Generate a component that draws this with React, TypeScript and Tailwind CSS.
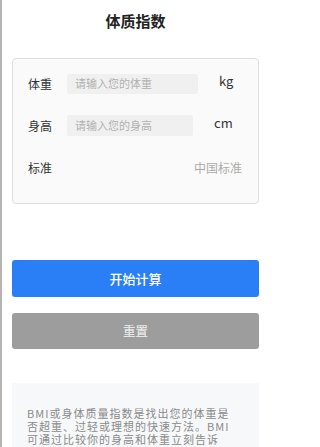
import React from "react";

export default function App() {
  const font = { fontFamily: '"Noto Sans CJK SC", "Noto Sans", sans-serif' };
  return (
    <div
      className="w-[270px] h-[447px] overflow-hidden bg-white border-l-2 border-[#b4b4b4] flex flex-col pl-[10px] pr-[11px]"
      style={font}
    >
      <div className="pt-[11px] h-[58px] text-center text-[15px] leading-[20px] font-bold text-[#222]">
        体质指数
      </div>

      <div className="rounded-[4px] border border-[#dedede] bg-[#fafafa] pt-[14px] pb-[25px] pl-[15px] pr-[16px] flex flex-col gap-[21px]">
        <div className="flex items-center h-[21px]">
          <span className="w-[39px] text-[12px] text-[#333] leading-[21px]">体重</span>
          <div className="w-[131px] h-[20px] bg-[#f0f0f0] rounded-[2px] pl-[8px] flex items-center text-[11px] text-[#b0b0b0]">
            请输入您的体重
          </div>
          <span className="ml-[21px] self-start text-[13px] leading-[15px] text-[#333]">kg</span>
        </div>
        <div className="flex items-center h-[21px]">
          <span className="w-[39px] text-[12px] text-[#333] leading-[21px]">身高</span>
          <div className="w-[126px] h-[21px] bg-[#f0f0f0] rounded-[2px] pl-[8px] flex items-center text-[11px] text-[#b0b0b0]">
            请输入您的身高
          </div>
          <span className="ml-[21px] self-start text-[13px] leading-[16px] text-[#333]">cm</span>
        </div>
        <div className="flex items-center justify-between h-[21px]">
          <span className="text-[12px] text-[#333]">标准</span>
          <span className="text-[12px] text-[#ababab]">中国标准</span>
        </div>
      </div>

      <button className="mt-[56px] h-[37px] w-full rounded-[3px] bg-[#2b7ff6] text-white text-[13px] font-medium flex items-center justify-center">
        开始计算
      </button>
      <button className="mt-[16px] h-[36px] w-full rounded-[3px] bg-[#9d9d9d] text-[#e6e6e6] text-[12.5px] font-medium flex items-center justify-center">
        重置
      </button>

      <div className="mt-[34px] flex-1 bg-[#f7f8fa] pt-[24px] pl-[15px] text-[11px] tracking-[1px] leading-[13px] text-[#8a8a8a]">
        <div className="whitespace-nowrap">BMI或身体质量指数是找出您的体重是</div>
        <div className="whitespace-nowrap">否超重、过轻或理想的快速方法。BMI</div>
        <div className="whitespace-nowrap">可通过比较你的身高和体重立刻告诉</div>
      </div>
    </div>
  );
}
